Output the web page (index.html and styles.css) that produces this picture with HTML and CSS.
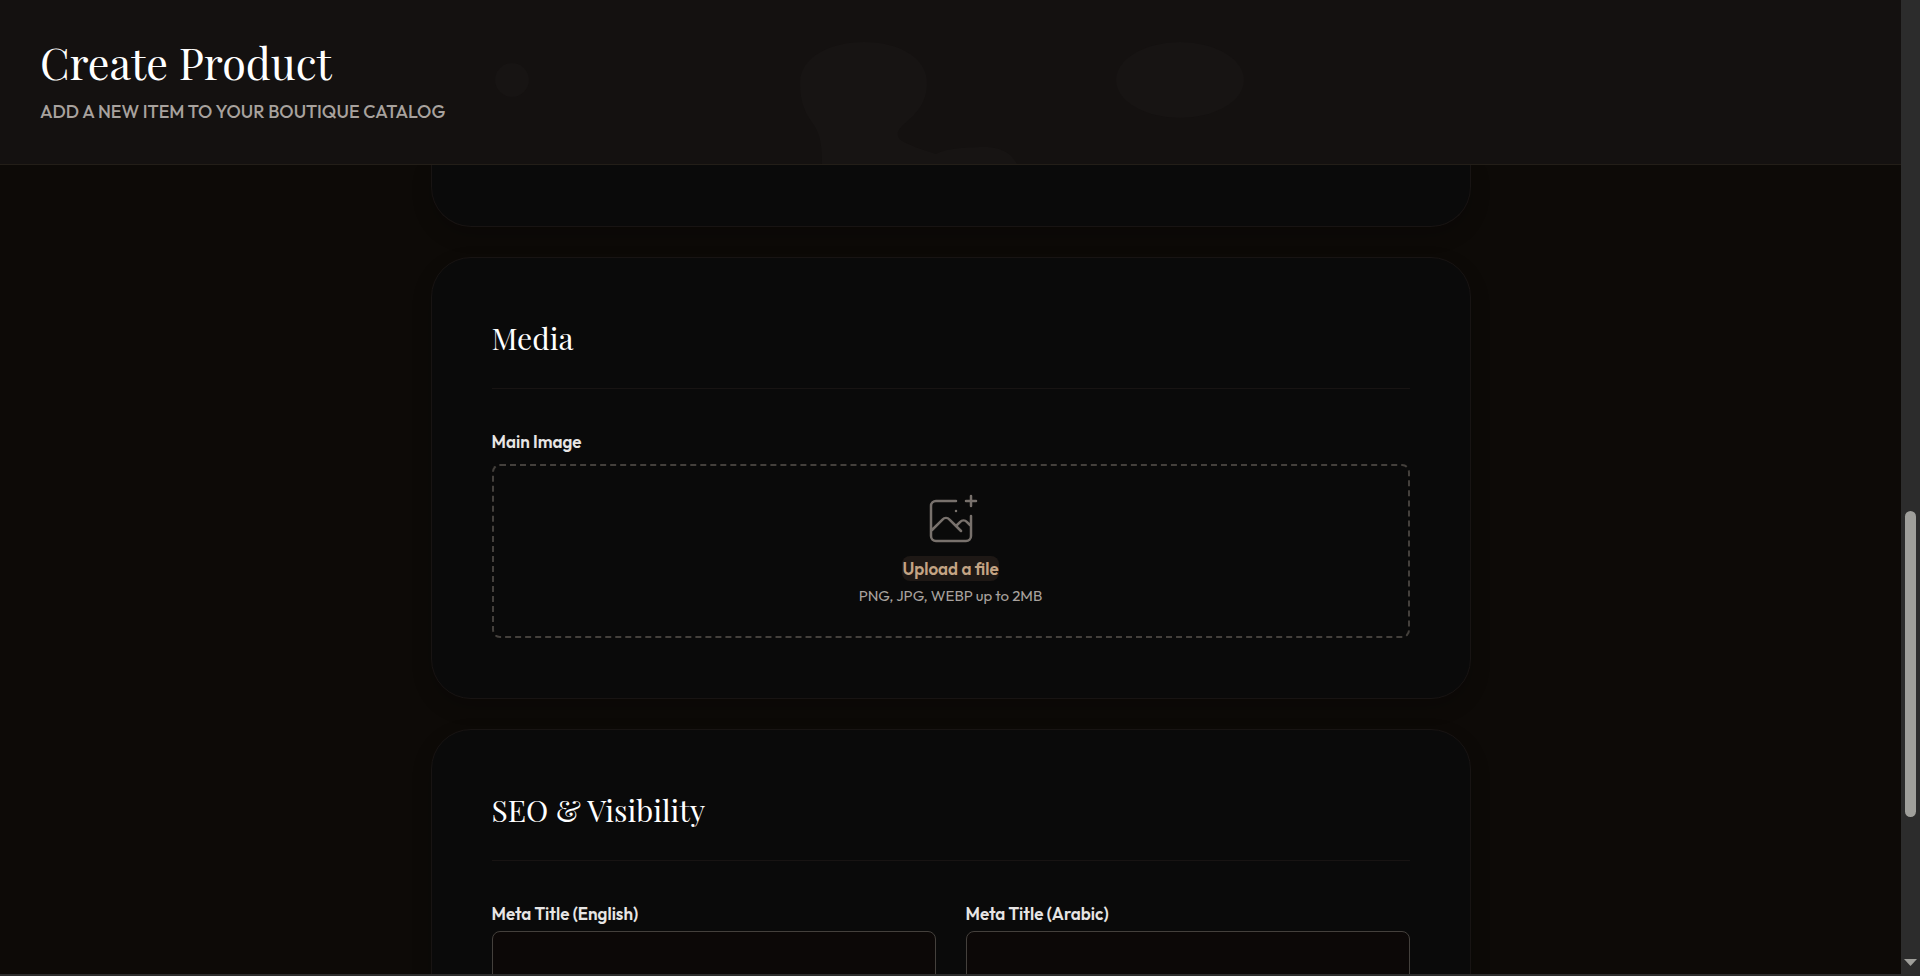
FILE: index.html
```html
<!DOCTYPE html>
<html lang="en">
  <head>
    <meta charset="UTF-8" />
    <meta name="viewport" content="width=device-width, initial-scale=1.0" />
    <title>Create Product</title>
    <link rel="stylesheet" href="styles.css" />
  </head>
  <body>
    <div class="page">
      <header class="page-header">
        <!-- Soft shapes behind the glass header -->
        <svg class="header-glow" width="1100" height="164" viewBox="400 0 1100 164" aria-hidden="true">
          <ellipse cx="512" cy="80" rx="17" ry="17" />
          <path d="M822 164 C822 144 820 132 811 121 C802 108 800 96 800 82 C800 60 826 42 864 42 C902 42 927 60 927 82 C927 104 916 114 902 126 C896 132 896 138 904 142 C916 148 924 150 936 154 C946 149 956 148 980 147 C1002 146 1012 154 1017 164 Z" />
          <ellipse cx="1180" cy="80" rx="64" ry="38" />
        </svg>
        <h1 class="page-title">Create Product</h1>
        <p class="page-subtitle">Add a new item to your boutique catalog</p>
      </header>

      <main class="content">
        <form class="product-form">
          <section class="card card-cut"></section>

          <section class="card">
            <h2 class="card-title">Media</h2>
            <label class="field-label" for="main-image">Main Image</label>
            <div class="dropzone">
              <svg class="dropzone-icon" viewBox="0 0 48 48" fill="none" stroke="currentColor" aria-hidden="true">
                <path stroke-width="2" stroke-linecap="round" stroke-linejoin="round" d="M28 8H12a4 4 0 00-4 4v20m32-12v8m0 0v8a4 4 0 01-4 4H12a4 4 0 01-4-4v-4m32-4l-3.172-3.172a4 4 0 00-5.656 0L28 28M8 32l9.172-9.172a4 4 0 015.656 0L28 28m0 0l4 4m4-24h8m-4-4v8m-12 4h.02" />
              </svg>
              <label class="upload-link" for="main-image">Upload a file</label>
              <input class="file-input" type="file" id="main-image" accept="image/*" />
              <p class="dropzone-hint">PNG, JPG, WEBP up to 2MB</p>
            </div>
          </section>

          <section class="card">
            <h2 class="card-title">SEO &amp; Visibility</h2>
            <div class="field-row">
              <div class="field">
                <label class="field-label" for="meta-title-en">Meta Title (English)</label>
                <input class="text-input" type="text" id="meta-title-en" />
              </div>
              <div class="field">
                <label class="field-label" for="meta-title-ar">Meta Title (Arabic)</label>
                <input class="text-input" type="text" id="meta-title-ar" dir="rtl" />
              </div>
            </div>
          </section>
        </form>
      </main>
    </div>

    <div class="scrollbar" aria-hidden="true">
      <span class="scrollbar-thumb"></span>
      <svg class="scrollbar-arrow" width="13" height="7" viewBox="0 0 13 7">
        <path d="M0 0h13L6.500 7z" />
      </svg>
    </div>
  </body>
</html>
```

FILE: styles.css
```css
* {
  box-sizing: border-box;
}
body {
  display: flex;
  height: 100vh;
  margin: 0;
  overflow: hidden;
  border-bottom: 2px solid #2c2c2c;
  background: #0d0a07;
  color: #e7e5e4;
  font-family: Outfit, Lato, sans-serif;
  font-size: 17px;
  line-height: 25px;
}
h1,
h2,
p {
  margin: 0;
}

.page {
  display: flex;
  flex: 1;
  flex-direction: column;
  min-width: 0;
}
.page-header {
  position: relative;
  flex: none;
  padding: 40px;
  border-bottom: 1px solid #231e18;
  background: #141110;
}
.header-glow {
  position: absolute;
  top: 0;
  left: 400px;
  fill: #171413;
}
.page-title,
.card-title {
  color: #ffffff;
  font-family: "Playfair Display", "Liberation Serif", serif;
  font-weight: 400;
}
.page-title {
  position: relative;
  font-size: 43px;
  line-height: 44px;
}
.page-subtitle {
  position: relative;
  margin-top: 15px;
  color: #a8a29e;
  font-size: 18px;
  font-weight: 500;
  text-transform: uppercase;
}

.content {
  flex: 1;
  min-height: 0;
  overflow: hidden;
}
.product-form {
  display: flex;
  flex-direction: column;
  gap: 30px;
  max-width: 1040px;
  margin: 0 auto;
}
.card {
  padding: 60px;
  border: 1px solid #181413;
  border-radius: 40px;
  background: #0a0a0a;
  box-shadow: 0 8px 20px rgba(0, 0, 0, 0.2);
}
.card-cut {
  padding: 0 0 61px;
  border-top: none;
  border-radius: 0 0 40px 40px;
}
.card-title {
  margin-bottom: 40px;
  padding-bottom: 30px;
  border-bottom: 1px solid #181413;
  font-size: 30px;
  line-height: 40px;
}
.field-label {
  display: block;
  font-weight: 600;
}

.dropzone {
  display: flex;
  flex-direction: column;
  align-items: center;
  gap: 5px;
  margin-top: 10px;
  padding: 25px 30px 30px;
  border: 2px dashed #44403c;
  border-radius: 8px;
}
.dropzone-icon {
  width: 60px;
  height: 60px;
  color: #78716c;
}
.upload-link {
  border-radius: 8px;
  background: #1e1815;
  color: #c4a484;
  font-weight: 600;
  cursor: pointer;
}
.file-input {
  position: absolute;
  width: 1px;
  height: 1px;
  opacity: 0;
}
.dropzone-hint {
  color: #a8a29e;
  font-size: 15px;
  line-height: 20px;
}

.field-row {
  display: grid;
  grid-template-columns: 1fr 1fr;
  gap: 30px;
}
.text-input {
  display: block;
  width: 100%;
  height: 52px;
  margin-top: 5px;
  padding: 10px 15px;
  border: 1px solid #44403c;
  border-radius: 8px;
  background: #0c0807;
  color: #e7e5e4;
  font: inherit;
}

.scrollbar {
  display: grid;
  grid-template-rows: 511fr 306fr 142fr 7px 8px;
  justify-items: center;
  flex: none;
  width: 19px;
  background: #2c2c2c;
}
.scrollbar-thumb {
  grid-row: 2;
  width: 11px;
  border-radius: 6px;
  background: #9f9f9b;
}
.scrollbar-arrow {
  grid-row: 4;
  fill: #9f9f9b;
}
```
